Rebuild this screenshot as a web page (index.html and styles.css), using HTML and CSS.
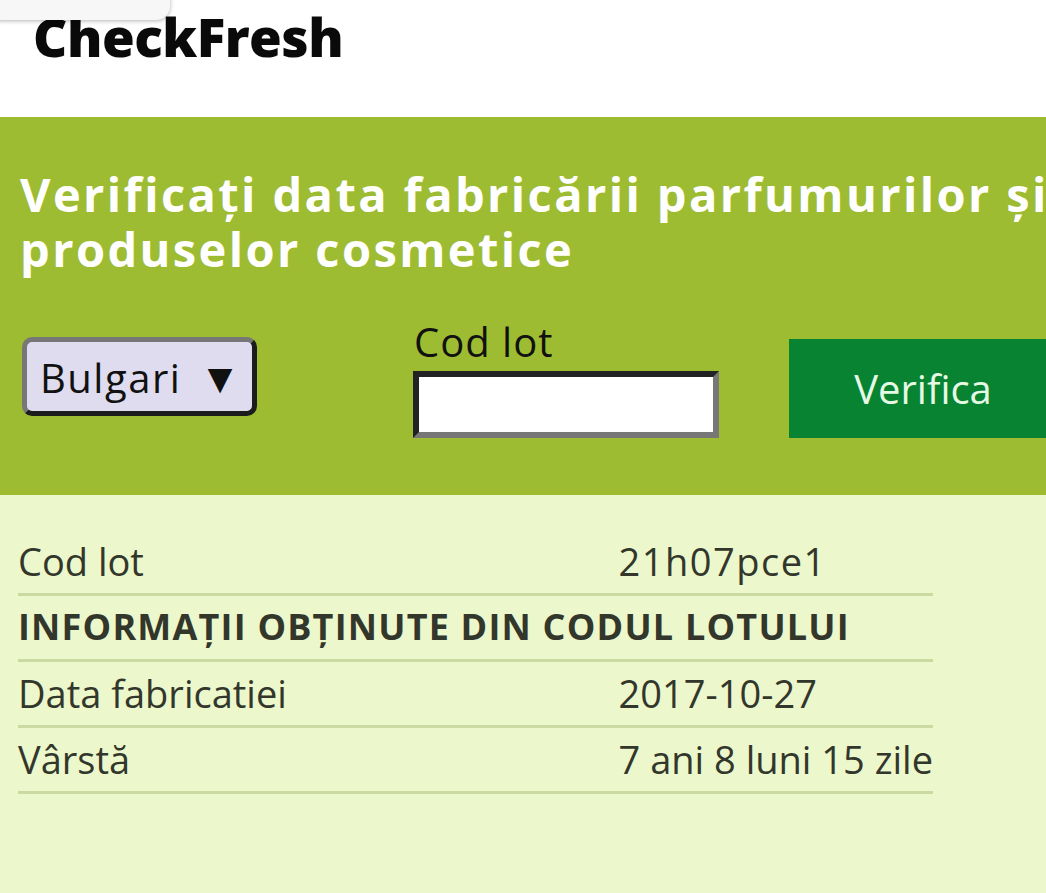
FILE: index.html
```html
<!DOCTYPE html>
<html>
<head>
    <title>CheckFresh</title>
    <meta charset="utf-8">
    <meta name="viewport" content="width=device-width, initial-scale=1">
    <link rel="stylesheet" href="styles.css">
</head>

<body>
    <div class="top-tab"></div>

    <header class="site-header">
        <div class="logo">CheckFresh</div>
    </header>

    <section class="check-panel">
        <h1>Verificați data fabricării parfumurilor și<br>produselor cosmetice</h1>
        <form id="check-form" class="check-form">
            <div class="brand-select">Bulgari <span class="arrow">▼</span></div>
            <div class="lot-field">
                <label for="lot">Cod lot</label>
                <input type="text" id="lot" name="lot">
            </div>
            <button type="submit">Verifica</button>
        </form>
    </section>

    <section class="results">
        <table class="result-table">
            <tr>
                <td class="label-cell">Cod lot</td>
                <td class="lot-value">21h07pce1</td>
            </tr>
            <tr>
                <td class="section-title" colspan="2">INFORMAȚII OBȚINUTE DIN CODUL LOTULUI</td>
            </tr>
            <tr>
                <td class="label-cell">Data fabricatiei</td>
                <td>2017-10-27</td>
            </tr>
            <tr>
                <td class="label-cell">Vârstă</td>
                <td>7 ani 8 luni 15 zile</td>
            </tr>
        </table>
    </section>

    <script>
        const checkForm = document.querySelector('#check-form');

        checkForm.addEventListener('submit', (e) => {
            e.preventDefault();
        })
    </script>
</body>
</html>
```

FILE: styles.css
```css
body {
    margin: 0;
    font-family: "Open Sans", Lato, Arial, sans-serif;
    background-color: #ecf7cc;
    overflow-x: hidden;
}

.top-tab {
    position: absolute;
    top: -20px;
    left: -12px;
    width: 182px;
    height: 40px;
    background-color: #f7f7f7;
    border-radius: 14px;
    box-shadow: 0px 1px 4px rgba(0,0,0,.3);
}

.site-header {
    background-color: #ffffff;
    height: 117px;
    padding: 10px 0 0 33px;
    box-sizing: border-box;
}

.logo {
    font-size: 53px;
    line-height: 53px;
    font-weight: 800;
    color: #0a0a0a;
    letter-spacing: -0.5px;
}

.check-panel {
    background-color: #9ebc32;
    padding: 50px 0 57px 20px;
    overflow: hidden;
}

.check-panel h1 {
    margin: 0;
    color: #ffffff;
    font-size: 47px;
    line-height: 55px;
    font-weight: 700;
    letter-spacing: 2.4px;
    white-space: nowrap;
}

.check-form {
    display: flex;
    align-items: flex-start;
    margin-top: 41px;
}

.check-form > * {
    flex-shrink: 0;
}

.brand-select {
    margin: 19px 0 0 2px;
    width: 235px;
    height: 79px;
    box-sizing: border-box;
    padding-left: 13px;
    line-height: 69px;
    font-size: 40px;
    letter-spacing: 1.5px;
    color: #111111;
    background-color: #dedcee;
    border: 5px solid;
    border-color: #777777 #1c1c1c #1c1c1c #777777;
    border-radius: 10px;
}

.arrow {
    margin-left: 6px;
    font-size: 42px;
}

.lot-field {
    margin-left: 156px;
    display: flex;
    flex-direction: column;
}

.lot-field label {
    font-size: 40px;
    line-height: 48px;
    color: #111111;
    letter-spacing: 1px;
    margin: 0 0 5px 1px;
}

.lot-field input {
    width: 306px;
    height: 67px;
    box-sizing: border-box;
    margin: 0;
    background-color: #ffffff;
    border: 6px solid;
    border-color: #222222 #777777 #777777 #222222;
    font-size: 32px;
}

button {
    margin: 21px 0 0 70px;
    width: 268px;
    height: 99px;
    background-color: #078332;
    color: #e6f9e4;
    font-family: "Open Sans", Lato, Arial, sans-serif;
    font-size: 40px;
    border: none;
    cursor: pointer;
}

button:hover {
    opacity: 0.8;
}

.results {
    padding: 35px 0 80px 18px;
}

.result-table {
    width: 915px;
    border-collapse: collapse;
    color: #33372b;
    font-size: 38px;
    line-height: 46px;
}

.result-table td {
    padding: 8px 0 9px 0;
    border-bottom: 3px solid #cbdaa3;
    white-space: nowrap;
}

.label-cell {
    width: 602px;
}

.lot-value {
    letter-spacing: 1.5px;
}

.section-title {
    font-weight: 700;
    font-size: 36px;
    letter-spacing: 1.2px;
}
```
